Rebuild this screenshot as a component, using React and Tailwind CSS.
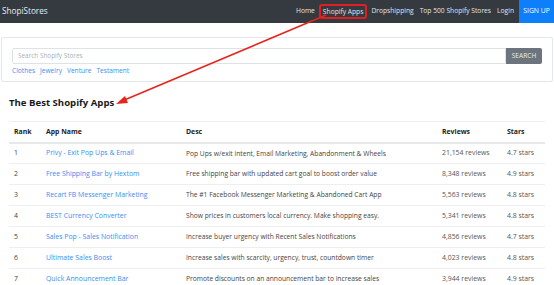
import React from "react";

const apps = [
  { rank: 1, name: "Privy - Exit Pop Ups & Email", desc: "Pop Ups w/exit intent, Email Marketing, Abandonment & Wheels", reviews: "21,154 reviews", stars: "4.7 stars" },
  { rank: 2, name: "Free Shipping Bar by Hextom", desc: "Free shipping bar with updated cart goal to boost order value", reviews: "8,348 reviews", stars: "4.9 stars" },
  { rank: 3, name: "Recart FB Messenger Marketing", desc: "The #1 Facebook Messenger Marketing & Abandoned Cart App", reviews: "5,563 reviews", stars: "4.8 stars" },
  { rank: 4, name: "BEST Currency Converter", desc: "Show prices in customers local currency. Make shopping easy.", reviews: "5,341 reviews", stars: "4.8 stars" },
  { rank: 5, name: "Sales Pop - Sales Notification", desc: "Increase buyer urgency with Recent Sales Notifications", reviews: "4,856 reviews", stars: "4.7 stars" },
  { rank: 6, name: "Ultimate Sales Boost", desc: "Increase sales with scarcity, urgency, trust, countdown timer", reviews: "4,023 reviews", stars: "4.8 stars" },
  { rank: 7, name: "Quick Announcement Bar", desc: "Promote discounts on an announcement bar to increase sales", reviews: "3,944 reviews", stars: "4.9 stars" },
];

const navLinks = ["Home", "Shopify Apps", "Dropshipping", "Top 500 Shopify Stores", "Login"];

export default function App() {
  return (
    <div className="relative w-[554px] h-[285px] overflow-hidden bg-white font-['Open_Sans',sans-serif]">
      {/* navbar */}
      <div className="h-[23px] bg-[#343a40] flex items-center justify-between pl-[2px]">
        <span className="text-[8.2px] text-[#e9ecef]">ShopiStores</span>
        <div className="flex items-center h-full">
          {navLinks.map((l) => (
            <span
              key={l}
              className={`text-[6.7px] text-[#e2e4e6] ${
                l === "Shopify Apps"
                  ? "outline-2 outline-[#e02020] rounded-[1px] mx-[3px] px-[2px] leading-[11px]"
                  : "px-[3px]"
              }`}
            >
              {l}
            </span>
          ))}
          <span className="ml-[2px] h-full w-[35px] bg-[#0d7ffb] text-white text-[6.8px] flex items-center justify-center">
            SIGN UP
          </span>
        </div>
      </div>

      {/* search card */}
      <div className="mx-[1px] mt-[14px] h-[45px] border border-[#e3e6ea] rounded-[2px] px-[10px] pt-[10px]">
        <div className="flex h-[16px]">
          <div className="flex-1 border border-[#dfe3e8] rounded-l-[2px] flex items-center px-[5px] text-[6.4px] text-[#aab0b6]">
            Search Shopify Stores
          </div>
          <div className="w-[36px] bg-[#6c757d] rounded-r-[2px] flex items-center justify-center text-[6.6px] text-[#e9ecef]">
            SEARCH
          </div>
        </div>
        <div className="flex gap-[5px] mt-[2px] text-[6.6px] text-[#3b8ef0]">
          <span>Clothes</span>
          <span>Jewelry</span>
          <span>Venture</span>
          <span>Testament</span>
        </div>
      </div>

      {/* heading */}
      <h2 className="ml-[9px] mt-[14px] text-[9.6px] font-bold text-[#1a1a1a]">The Best Shopify Apps</h2>

      {/* table */}
      <table className="ml-[9px] mt-[11px] w-[536px] table-fixed border-collapse text-[6.9px] text-[#444]">
        <colgroup>
          <col className="w-[32px]" />
          <col className="w-[140px]" />
          <col className="w-[256px]" />
          <col className="w-[65px]" />
          <col className="w-[43px]" />
        </colgroup>
        <thead>
          <tr className="h-[21px] border-t border-[#eceef0] border-b-2 border-b-[#e6e8ea] text-left font-bold text-[#222]">
            <th className="pl-[5px]">Rank</th>
            <th className="pl-[5px]">App Name</th>
            <th className="pl-[5px]">Desc</th>
            <th className="pl-[5px]">Reviews</th>
            <th className="pl-[5px]">Stars</th>
          </tr>
        </thead>
        <tbody>
          {apps.map((a) => (
            <tr key={a.rank} className="h-[21px] border-b border-[#eceef0]">
              <td className="pl-[5px] text-[#444]">{a.rank}</td>
              <td className="pl-[5px] text-[#3b8ef0] whitespace-nowrap">{a.name}</td>
              <td className="pl-[5px] whitespace-nowrap text-[6.7px]">{a.desc}</td>
              <td className="pl-[5px] text-[#555]">{a.reviews}</td>
              <td className="pl-[5px] text-[#555]">{a.stars}</td>
            </tr>
          ))}
        </tbody>
      </table>

      {/* annotation arrow */}
      <svg className="absolute inset-0 pointer-events-none" width="554" height="285" viewBox="0 0 554 285">
        <line x1="326" y1="15" x2="122" y2="101" stroke="#e8231b" strokeWidth="1.6" />
        <polygon points="116,104 125,96 128,103" fill="#e8231b" />
      </svg>
    </div>
  );
}
